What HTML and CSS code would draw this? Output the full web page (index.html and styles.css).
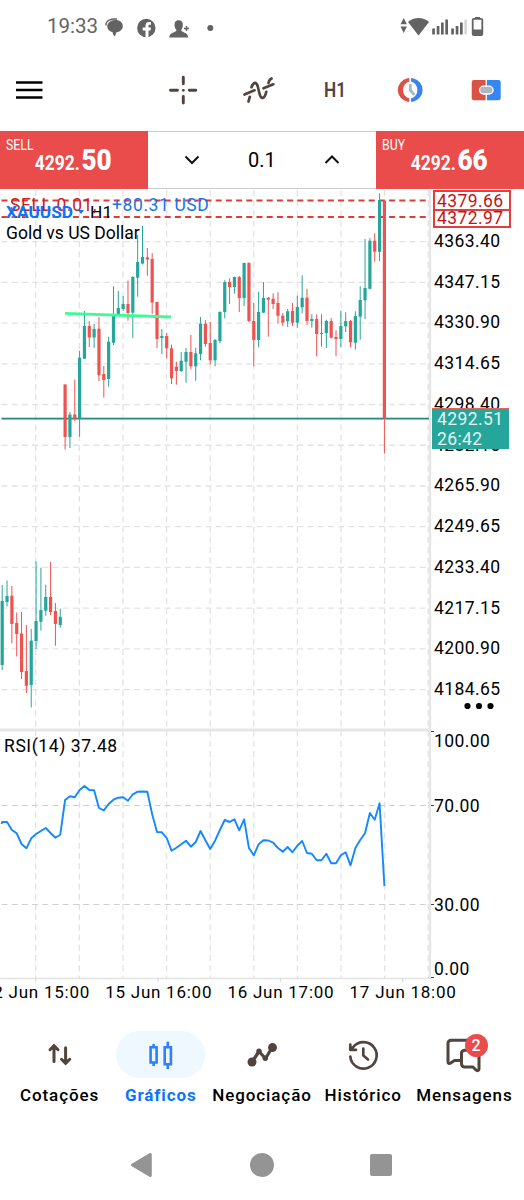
FILE: index.html
```html
<!DOCTYPE html>
<html lang="pt">
<head>
  <meta charset="UTF-8" />
  <meta name="viewport" content="width=device-width, initial-scale=1" />
  <title>XAUUSD H1</title>
  <link rel="stylesheet" href="styles.css">
</head>
<body>
  <div class="phone">
    <header class="status">
      <span class="clock">19:33</span>
      <svg class="status-left" width="120" height="24" viewBox="0 0 120 24">
        <path d="M3 11.500C2.500 6.500 7 4.700 14 5" fill="none" stroke="#636363" stroke-width="1.400"/>
        <path d="M11.800 6C16 5.500 20 8 19.800 12.500C19.500 16 16.500 18 13.500 18.300L11.800 22.500C10.300 21 9.800 20 9.500 18C6 17.500 4 14.500 4.300 11.500C4.800 8.500 8 6.300 11.800 6Z" fill="#636363"/>
        <circle cx="43.300" cy="14" r="9.200" fill="#636363"/>
        <path d="M42.500 23.500V16.500H39.700V13.500H42.500V11.500C42.500 9 44 8 46 8H48V10.700H46.800C45.800 10.700 45.500 11.200 45.500 12V13.500H48L47.500 16.500H45.500V23.500Z" fill="#fff"/>
        <path d="M75.500 6.300C79 6.300 80 8.500 79.800 11.500C79.700 13.500 79.200 14.800 78.200 16C78.300 19 84.800 17.500 85.300 23.500H66.200C66.700 17.500 73.400 19 73.500 16C72.300 14.800 71.700 13.500 71.600 11.500C71.400 8.500 72.500 6.300 75.500 6.300Z" fill="#636363"/>
        <path d="M81 14.500H86M83.500 12V17" stroke="#636363" stroke-width="1.500"/>
        <circle cx="107.300" cy="14" r="3" fill="#636363"/>
      </svg>
      <svg class="status-right" width="86" height="24" viewBox="0 0 86 24" fill="#636363">
        <path d="M.5 10.200L3.700 4L6.900 10.200ZM.5 12.500H6.900L3.700 19Z"/>
        <path d="M8 8C14 2.500 23 2.500 29 8L18.500 21.500Z"/>
        <path d="M32.200 14.500h2.700v6h-2.700zM36.700 12h2.700v8.500h-2.700zM41 8.500h2.700v12h-2.700zM45.300 5.500h2.700v15h-2.700zM51.200 14.500h2.700v6h-2.700zM55.700 12h2.700v8.500h-2.700zM60 8.500h2.700v12h-2.700z"/>
        <path d="M64.300 5.500h2.700v15h-2.700z" fill="#d8d8d8"/>
        <path d="M75 3h5v2h-5z"/>
        <rect x="72.700" y="4.800" width="9.600" height="16.200" rx="1" fill="none" stroke="#636363" stroke-width="1.800"/>
        <path d="M73 15.500h9v5.500h-9z"/>
      </svg>
    </header>

    <div class="toolbar">
      <svg class="menu" width="27" height="20" viewBox="0 0 27 20" stroke="#000" stroke-width="2.600"><path d="M0 2.500H26.500M0 10H26.500M0 17.500H26.500"/></svg>
      <div class="tools">
        <svg width="32" height="32" viewBox="0 0 32 32" stroke="#51443f" stroke-width="2.900" stroke-linecap="round"><path d="M3.500 16.300H10.500M22.300 16.300H28.800M16.300 3.200V9.800M16.300 22.500V29"/><circle cx="16.300" cy="16.300" r="1.400" stroke="none" fill="#51443f"/></svg>
        <svg width="32" height="32" viewBox="0 0 32 32" fill="none" stroke="#51443f" stroke-width="2.700" stroke-linecap="round"><path d="M1.500 20.500L11.500 16.300M20.500 14.300L30.300 10.300M5.500 27.500L6.800 22.800M8.500 13.300C10.500 7.500 13.300 7.500 14.800 12.500L16.600 20C18 25.500 21.500 25.500 23.300 17.800M25.500 9C26 6.700 27.200 5 28.500 4.500"/></svg>
        <span class="period">H1</span>
        <svg width="32" height="32" viewBox="0 0 32 32">
          <path d="M15.400 4.300H13.500A11.900 11.900 0 0 0 13.500 27.700H15.400V24.600A9 9 0 0 1 15.400 7.400Z" fill="#dc5145"/>
          <path d="M17 4.300H18.900A11.900 11.900 0 0 1 18.900 27.700H17V24.600A9 9 0 0 0 17 7.400Z" fill="#3586f0"/>
          <path d="M16.300 10V16.200L20.300 20.800" fill="none" stroke="#abb8bf" stroke-width="2.800"/>
        </svg>
        <svg width="32" height="32" viewBox="0 0 32 32">
          <path d="M15.600 5.900V26.300H4A2.300 2.300 0 0 1 1.700 24V8.200A2.300 2.300 0 0 1 4 5.900Z" fill="#dc5145"/>
          <path d="M17 5.900V26.300H28.500A2.300 2.300 0 0 0 30.700 24V8.200A2.300 2.300 0 0 0 28.500 5.900Z" fill="#3586f0"/>
          <rect x="9.500" y="12.200" width="13.600" height="7.800" rx="3.900" fill="#abb8bf" stroke="#fff" stroke-width="1.300"/>
        </svg>
      </div>
    </div>

    <div class="trade">
      <div class="deal sell">
        <span class="side">SELL</span>
        <span class="price">4292.<b>50</b></span>
      </div>
      <div class="volume">
        <svg width="16" height="10" viewBox="0 0 16 10"><path d="M1.500 1.500L8 8L14.500 1.500"/></svg>
        <span>0.1</span>
        <svg width="16" height="10" viewBox="0 0 16 10"><path d="M1.500 8L8 1.500L14.500 8"/></svg>
      </div>
      <div class="deal buy">
        <span class="side">BUY</span>
        <span class="price">4292.<b>66</b></span>
      </div>
    </div>

    <main class="chart">
      <svg id="plot" width="434" height="794" viewBox="0 189 434 794"></svg>
      <div class="axis">
        <div class="prices">
          <span>4363.40</span><span>4347.15</span><span>4330.90</span><span>4314.65</span>
          <span>4298.40</span><span>4282.15</span><span>4265.90</span><span>4249.65</span>
          <span>4233.40</span><span>4217.15</span><span>4200.90</span><span>4184.65</span>
        </div>
        <div class="levels">
          <span>100.00</span><span>70.00</span><span>30.00</span><span>0.00</span>
        </div>
        <div class="level-tag first">4379.66</div>
        <div class="level-tag second">4372.97</div>
        <div class="bid-tag">4292.51<br>26:42</div>
        <svg class="more" width="30" height="8" viewBox="0 0 30 8"><circle cx="3.500" cy="4" r="3.100"/><circle cx="15" cy="4" r="3.100"/><circle cx="26.500" cy="4" r="3.100"/></svg>
      </div>
      <div class="position"><span class="lot">SELL 0.01,</span><span class="profit">+80.31 USD</span></div>
      <div class="symbol">
        <b>XAUUSD</b><i></i><span>H1</span>
      </div>
      <div class="description">Gold vs US Dollar</div>
      <div class="rsi-title">RSI(14) 37.48</div>
    </main>
    <div class="dates">
      <span>12 Jun 15:00</span><span>15 Jun 16:00</span><span>16 Jun 17:00</span><span>17 Jun 18:00</span>
    </div>

    <nav class="tabs">
      <a><span class="pill"><svg width="36" height="36" viewBox="0 0 36 36" fill="none" stroke="#51443f" stroke-width="3" stroke-linecap="round"><path d="M12 24.500V9M8 12.700L12 8.700L16 12.700M23.600 10.700V26M19.500 22.300L23.600 26.300L27.700 22.300"/></svg></span>Cotações</a>
      <a class="active"><span class="pill"><svg width="36" height="36" viewBox="0 0 36 36" fill="none" stroke="#2f7fff" stroke-width="2.600"><path d="M7.600 10.300H13.600V25.500H7.600ZM21.700 10.300H27.900V27.300H21.700ZM10.600 7V10M10.600 26V29M24.800 4.800V10M24.800 28V32"/></svg></span>Gráficos</a>
      <a><span class="pill"><svg width="36" height="36" viewBox="0 0 36 36" fill="none" stroke="#51443f" stroke-width="3.200" stroke-linejoin="round"><path d="M8 25L15 14.500L21.500 21.500L28.500 10"/><g fill="#51443f" stroke="none"><circle cx="8" cy="25" r="4.500"/><circle cx="15" cy="14.200" r="2.700"/><circle cx="21.300" cy="21.300" r="2.700"/><circle cx="28.500" cy="10.600" r="4.500"/></g></svg></span>Negociação</a>
      <a><span class="pill"><svg width="36" height="36" viewBox="0 0 36 36" fill="none" stroke="#51443f" stroke-width="2.700" stroke-linecap="round" stroke-linejoin="round"><path d="M5.300 19.500A13.200 13.200 0 1 0 8 10.300L5.500 12.500M5.300 7.500V12.800H11M18.300 11.500V18.500L23 22.500"/></svg></span>Histórico</a>
      <a><span class="pill"><svg width="36" height="36" viewBox="0 0 36 36" fill="none" stroke="#51443f" stroke-width="3" stroke-linejoin="round"><path d="M29 10V7A3 3 0 0 0 26 3.200H5A3 3 0 0 0 2 6.200V25.300C2 26.500 3.500 27 5 25.800L8.500 23.500H15.500"/><path d="M18.500 13.200H29.500A3.500 3.500 0 0 1 33 16.700V32C33 34 31 34 30 33L27 30H18.500A3.500 3.500 0 0 1 15.500 26.500V16.500A3.300 3.300 0 0 1 18.500 13.200Z"/></svg><em>2</em></span>Mensagens</a>
    </nav>

    <footer class="keys">
      <svg width="24" height="26" viewBox="0 0 24 26"><path d="M20.300 2.500V23.500L2.500 13Z" stroke="#949494" stroke-width="3" stroke-linejoin="round"/></svg>
      <svg width="24" height="26" viewBox="0 0 24 26"><circle cx="12" cy="13" r="12"/></svg>
      <svg width="24" height="26" viewBox="0 0 24 26"><rect x="1" y="2" width="22" height="22" rx="2"/></svg>
    </footer>
  </div>
  <script src="chart.js"></script>
</body>
</html>
```
FILE: styles.css
```css
body {
  margin: 0;
  background: #fff;
  font-family: Roboto, "Liberation Sans", sans-serif;
  color: #000;
}
.phone {
  width: 524px;
  height: 1200px;
  overflow: hidden;
  display: flex;
  flex-direction: column;
}
svg {
  display: block;
  flex-shrink: 0;
}

/* status bar */
.status {
  display: flex;
  align-items: center;
  height: 49px;
  padding: 3px 38px 0 47px;
  box-sizing: border-box;
}
.clock {
  width: 56px;
  font-size: 20.500px;
  color: #636363;
}
.status-right {
  margin-left: auto;
}

/* toolbar */
.toolbar {
  display: flex;
  align-items: center;
  height: 82px;
  padding: 0 22px 0 16px;
}
.tools {
  flex: 1;
  display: flex;
  justify-content: space-between;
  margin-left: 124px;
}
.period {
  width: 32px;
  line-height: 32px;
  font-size: 21px;
  font-weight: 600;
  text-align: center;
  color: #51443f;
  transform: scaleX(.82);
}

/* one click trading */
.trade {
  display: flex;
  height: 58px;
  border-top: 1px solid #ccc;
  border-bottom: 1px solid #ccc;
  box-sizing: border-box;
}
.deal {
  position: relative;
  width: 148.300px;
  margin: -1px 0;
  background: #ea4c4b;
  color: #fff;
  display: flex;
  justify-content: center;
}
.side {
  position: absolute;
  left: 6px;
  top: 5px;
  font-size: 15px;
  transform: scaleX(.82);
  transform-origin: left;
}
.price {
  margin-left: -2px;
  line-height: 57px;
  font-size: 20px;
  font-weight: 700;
  white-space: nowrap;
  transform: scaleX(.87);
}
.price b {
  font-size: 30px;
  margin-left: 2px;
}
.volume {
  flex: 1;
  display: flex;
  align-items: center;
  justify-content: space-between;
  padding: 0 36px 0 36px;
  font-size: 20px;
}
.volume svg {
  fill: none;
  stroke: #111;
  stroke-width: 2;
}

/* chart */
.chart {
  position: relative;
  display: flex;
  height: 794px;
  font-size: 17.500px;
}
.axis {
  position: relative;
  flex: 1;
  letter-spacing: .4px;
}
.prices, .levels {
  display: flex;
  flex-direction: column;
}
.prices {
  padding-top: 32px;
  line-height: 40.730px;
}
.levels {
  line-height: 20px;
  padding-top: 21px;
}
.levels span:nth-child(2) { margin-top: 45px; }
.levels span:nth-child(3) { margin-top: 79px; }
.levels span:nth-child(4) { margin-top: 44px; }
.level-tag {
  position: absolute;
  left: 0;
  width: 72px;
  padding-left: 2px;
  border: 2px solid #e53c3c;
  background: #fff;
  color: #c01515;
  overflow: hidden;
  box-sizing: content-box;
}
.level-tag.first {
  top: 1px;
  left: -1px;
  height: 17px;
  line-height: 19px;
}
.level-tag.second {
  top: 20px;
  left: -1px;
  height: 15px;
  line-height: 14px;
}
.bid-tag {
  position: absolute;
  left: -2px;
  top: 219px;
  width: 72px;
  height: 40px;
  padding-left: 5px;
  line-height: 20.300px;
  border-top: 1px solid #e0655c;
  background: #26a69a;
  color: #e4f5f3;
}
.more {
  position: absolute;
  left: 30px;
  top: 513px;
}
.position, .symbol, .description, .rsi-title {
  position: absolute;
  line-height: 20px;
  white-space: nowrap;
}
.position {
  left: 10px;
  top: 6px;
  letter-spacing: .6px;
}
.lot {
  display: inline-block;
  width: 102px;
  color: #cf2020;
}
.profit {
  color: #1a73ee;
}
.symbol {
  left: 6px;
  top: 13px;
  display: flex;
  align-items: center;
  font-size: 17.300px;
}
.symbol b {
  color: #0b74ff;
}
.symbol i {
  margin: 0 6px 0 5px;
  border: 3px solid transparent;
  border-top: 4px solid #0b74ff;
  border-bottom: 0;
}
.description {
  left: 6px;
  top: 34px;
}
.rsi-title {
  left: 4px;
  top: 547px;
  letter-spacing: .6px;
}
.dates {
  display: flex;
  height: 48px;
  margin-left: -17px;
  line-height: 18px;
  font-size: 17px;
  letter-spacing: .75px;
  white-space: nowrap;
}
.dates span {
  flex: 0 0 122.200px;
}

/* bottom tabs */
.tabs {
  display: flex;
  padding: 0 9px 0 9px;
}
.tabs a {
  flex: 1 1 0;
  min-width: 0;
  display: flex;
  flex-direction: column;
  align-items: center;
  font-size: 17px;
  font-weight: 500;
  line-height: 34px;
  letter-spacing: .9px;
}
.pill {
  position: relative;
  display: flex;
  align-items: center;
  justify-content: center;
  width: 89px;
  height: 47px;
  border-radius: 24px;
}
.tabs .active {
  color: #0b74ff;
  font-weight: 700;
}
.active .pill {
  background: #eff7ff;
}
.pill em {
  position: absolute;
  left: 45px;
  top: 3px;
  width: 23px;
  height: 23px;
  border-radius: 50%;
  background: #ea4c4b;
  color: #fff;
  font: 500 16px/24px Roboto, sans-serif;
  text-align: center;
}

/* system keys */
.keys {
  display: flex;
  justify-content: space-between;
  padding: 40px 131px 0 130px;
  fill: #949494;
}
```
FILE: chart.js
```js
const plot = document.getElementById('plot');
const UP = '#26a69a';
const DOWN = '#ef5350';
const START = 2.2;
const STEP = 4.838;

// direction, high, body top, body bottom, low
const candles = [
  [1,585,601,665,670],[1,580.5,596,602,606.5],[0,586,595.7,624,643.5],[0,612.5,623,634,656.5],
  [0,612,633.5,672,679],[0,625,671,685.7,693],[1,629,640.7,685,707.5],[1,561.5,621,641,649],
  [1,567.7,610,621.7,630.5],[1,584.7,597,610.7,615.7],[0,562,597,612,615],[0,603,611,624,645.7],
  [1,608.7,616.7,625,627.7],[0,384.3,384.5,437,449.5],[1,412,414.5,437,448],[0,379.5,414.5,419,421],
  [1,350.7,357.7,418.7,436.7],[1,311,326,358.7,359],[0,321,326,337.5,347],[1,324,329,337.5,348],
  [0,317,328.7,375.3,381],[0,366,374,380,397.7],[1,336.7,341.7,379,386.7],[1,286.3,314,342.7,345],
  [1,291,308,314,315],[1,296,304,309,311],[0,280.7,304,313,320.7],[1,276,277,312.7,338],
  [1,235,262,277.7,296.7],[1,226,257,263.5,264.5],[0,248,257.3,259.5,275.7],[0,253,259,302.5,314],
  [0,301.7,302,339,348],[1,329,336,338,354],[0,333,336,348.3,358.3],[0,344.7,348.3,378.3,384],
  [0,361.7,366.7,371,384.7],[1,352,360.7,371,372],[1,348,352,361.7,382.7],[0,335,352,366.3,369.3],
  [1,347.7,353.3,366.3,380.7],[1,317,323.7,354,360.3],[0,320,323.7,344,346.7],[0,322,343,360.3,364.3],
  [1,339,340,360.3,366.3],[1,311.3,312,341,343.3],[1,280.3,282,312,318.3],[0,278.3,282,287,304],
  [1,276.7,277,287,293.7],[0,276,277,298,312],[1,262.7,263,298,306],[0,262.3,263,321,322],
  [0,303,321,340,366.3],[1,291.7,312,340,347.3],[1,282,298,312.7,313],[0,297,297.7,299.7,336.7],
  [0,293.3,298.7,304,309],[0,292.3,303,315.7,323.3],[0,313,315.7,322.7,326],[1,309,311.3,321.3,327],
  [0,303,311,322.7,326],[1,295.7,307,322.7,327.7],[1,275.3,297.7,307.3,313.3],[0,288.7,297.7,321,325],
  [1,314.3,319,321,327.7],[0,314.3,319,334,356.3],[0,314.3,333,334,346.7],[1,319.7,321,333,348],
  [0,318,321,337.7,338.5],[0,330.3,337,339,356.3],[1,310.7,326,339,347],[1,312.3,321,326.3,332],
  [0,320,321,342.3,347.3],[1,311.3,316,342.7,349.7],[1,286.3,300,316.7,339.7],[1,239,288,300.3,319],
  [1,238,240.7,288.7,289.5],[0,233.3,240.7,251.7,261.7],[1,193.3,200,251.7,261],[0,200.5,200.7,418.7,453.7]
];

const rsi = [
  822,822,830,833.3,844,848.3,838.3,834,831,828,833,837.7,834.7,800,796.3,797.3,790,786,790,790.3,
  808,810.3,804,799.7,797.7,797.3,800.7,794.3,791.7,791.5,791.7,814.3,832,832.3,838,850.7,847.7,844.3,840.7,846.7,
  842,831,840.3,849,840.7,830,820,822,819.3,830.3,819.3,848,855.3,844.3,840.3,840.5,842.7,848,851.7,847,
  852.3,845.7,841,853,853.7,860.3,860.3,853.7,863.3,863.3,855.3,852.3,865.3,848,840,833.3,813,819.7,803.3,886
];

function line(x1, y1, x2, y2, color, width, dash) {
  return `<line x1="${x1}" y1="${y1}" x2="${x2}" y2="${y2}" stroke="${color}" stroke-width="${width}"` +
    (dash ? ` stroke-dasharray="${dash}"` : '') + '/>';
}

let out = '';

// grid
for (let i = 0; i < 10; i++) {
  out += line(35.7 + i * 43.62, 190, 35.7 + i * 43.62, 978, '#e3e3e3', 1.3, '6 4.2');
}
for (let i = 0; i < 12; i++) {
  out += line(1.5, 241.6 + i * 40.73, 429, 241.6 + i * 40.73, '#e3e3e3', 1.3, '6 4.2');
}
out += line(1.5, 805.5, 429, 805.5, '#cfcfcf', 1, '6 4.2');
out += line(1.5, 904.5, 429, 904.5, '#cfcfcf', 1, '6 4.2');

// pane borders
out += line(0, 730, 430, 730, '#e6e6e6', 3);
out += line(0, 978.5, 431, 978.5, '#e3e3e3', 1.5);
out += line(430, 190, 430, 979, '#e6e6e6', 2.4);
[35.7, 158, 280.5, 402.7].forEach(x => out += line(x, 978, x, 982, '#ddd', 1.3));
[731.5, 805.5, 904.5, 977.5].forEach(y => out += line(431, y, 434, y, '#444', 1));

// open position levels
out += line(1.5, 200.5, 427, 200.5, '#e53935', 1.8, '6 4.2');
out += line(1.5, 217, 427, 217, '#e53935', 1.8, '6 4.2');

// current price
out += line(1.5, 418, 429, 418, '#ef8a80', 1.2);
out += line(1.5, 418.8, 429, 418.8, '#26897f', 1.5);

candles.forEach(([up, high, top, bottom, low], i) => {
  const x = START + i * STEP;
  const color = up ? UP : DOWN;
  out += line(x, high, x, low, color, 1);
  out += `<rect x="${x - 1.6}" y="${top}" width="3.2" height="${bottom - top}" fill="${color}"/>`;
});

out += line(65, 313.3, 171, 317, '#3dfc97', 2.8);

const points = rsi.map((y, i) => `${START + i * STEP},${y}`).join(' ');
out += `<polyline points="1.5,824 ${points}" fill="none" stroke="#1388ff" stroke-width="1.9" stroke-linejoin="round"/>`;

plot.innerHTML = out;
```
